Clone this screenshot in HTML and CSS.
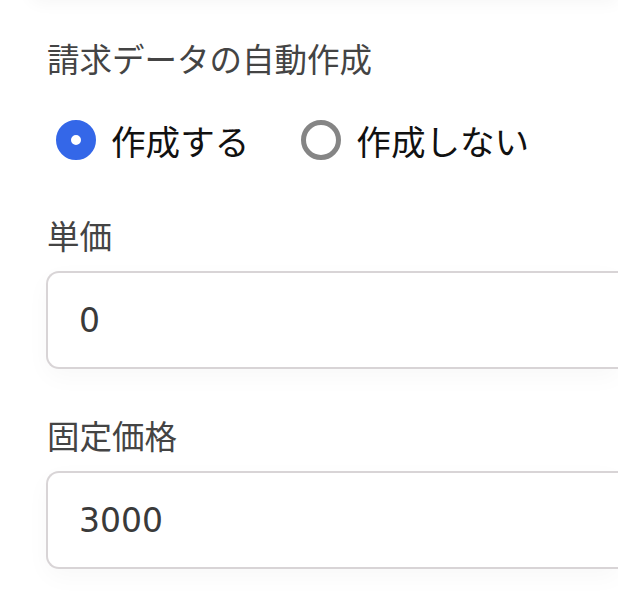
FILE: index.html
```html
<!DOCTYPE html>
<html lang="ja">
<head>
<meta charset="utf-8">
<link rel="stylesheet" href="styles.css">
</head>
<body>
<div class="topcard"></div>
<div class="form">
  <div class="field">
    <div class="label">請求データの自動作成</div>
    <div class="radios">
      <label class="radio"><span class="dot dot-on"></span><span class="rtext">作成する</span></label>
      <label class="radio"><span class="dot dot-off"></span><span class="rtext">作成しない</span></label>
    </div>
  </div>
  <div class="field field-price">
    <div class="label">単価</div>
    <div class="input">0</div>
  </div>
  <div class="field field-fixed">
    <div class="label">固定価格</div>
    <div class="input">3000</div>
  </div>
</div>
</body>
</html>
```
FILE: styles.css
```css
html, body {
  margin: 0;
  padding: 0;
  background: #ffffff;
  overflow: hidden;
  width: 618px;
  height: 606px;
}
body {
  font-family: "Noto Sans CJK JP", "Noto Sans", sans-serif;
}
.topcard {
  height: 20px;
  margin-top: -20px;
  margin-left: 30px;
  border-radius: 20px 0 0 20px;
  background: #fff;
  box-shadow: 0 2px 18px rgba(0, 0, 0, 0.045);
}
.form {
  padding-left: 46px;
  padding-top: 42px;
}
.label {
  font-size: 32.5px;
  line-height: 32px;
  height: 32px;
  color: #444444;
  padding-left: 1px;
  white-space: nowrap;
}
.radios {
  display: flex;
  align-items: center;
  gap: 52px;
  margin-top: 46px;
  padding-left: 10px;
  height: 40px;
}
.radio {
  display: flex;
  align-items: center;
  gap: 15px;
}
.dot {
  box-sizing: border-box;
  width: 40px;
  height: 40px;
  border-radius: 50%;
  background: #fff;
  flex: none;
}
.dot-on {
  border: 15px solid #3467e8;
}
.dot-off {
  border: 5px solid #858585;
}
.rtext {
  font-size: 34.6px;
  line-height: 40px;
  color: #111111;
  white-space: nowrap;
}
.field-price {
  margin-top: 59px;
}
.field-fixed {
  margin-top: 50px;
}
.input {
  box-sizing: border-box;
  margin-top: 20px;
  height: 98px;
  border: 2px solid #d8d4d6;
  border-right: none;
  border-radius: 13px 0 0 13px;
  background: #fff;
  box-shadow: 0 8px 24px rgba(0, 0, 0, 0.03);
  padding-left: 31px;
  font-family: "DejaVu Sans", "Liberation Sans", sans-serif;
  font-size: 33px;
  color: #3a3a3a;
  display: flex;
  align-items: center;
}
```
